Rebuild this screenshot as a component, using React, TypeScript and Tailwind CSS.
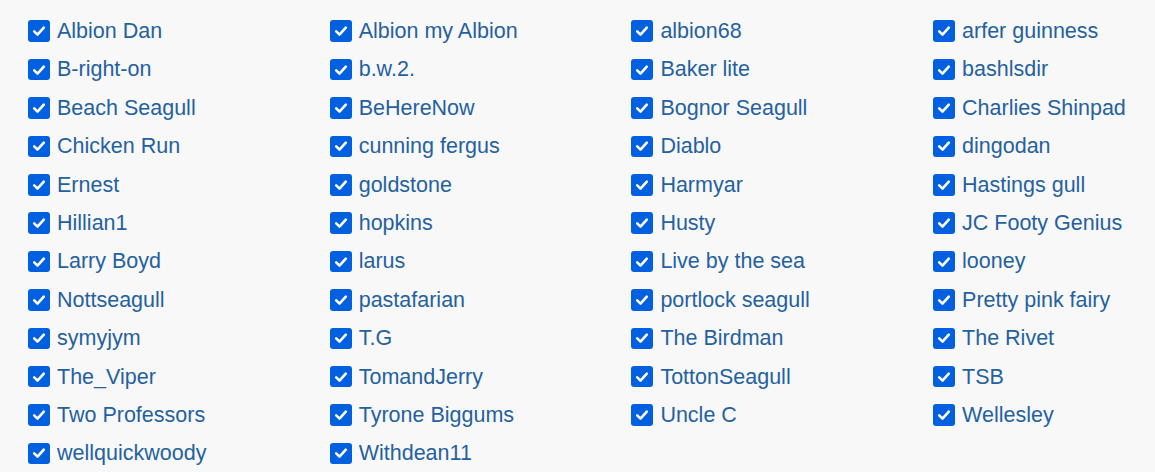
import React from 'react';

const names = [
  'Albion Dan', 'Albion my Albion', 'albion68', 'arfer guinness',
  'B-right-on', 'b.w.2.', 'Baker lite', 'bashlsdir',
  'Beach Seagull', 'BeHereNow', 'Bognor Seagull', 'Charlies Shinpad',
  'Chicken Run', 'cunning fergus', 'Diablo', 'dingodan',
  'Ernest', 'goldstone', 'Harmyar', 'Hastings gull',
  'Hillian1', 'hopkins', 'Husty', 'JC Footy Genius',
  'Larry Boyd', 'larus', 'Live by the sea', 'looney',
  'Nottseagull', 'pastafarian', 'portlock seagull', 'Pretty pink fairy',
  'symyjym', 'T.G', 'The Birdman', 'The Rivet',
  'The_Viper', 'TomandJerry', 'TottonSeagull', 'TSB',
  'Two Professors', 'Tyrone Biggums', 'Uncle C', 'Wellesley',
  'wellquickwoody', 'Withdean11',
];

function Check() {
  return (
    <span className="flex-none w-[22px] h-[21.5px] rounded-[3px] bg-[#0060df] flex items-center justify-center">
      <svg width="16" height="16" viewBox="0 0 16 16" fill="none">
        <path d="M3.2 8.4 L6.5 11.6 L12.8 4.6" stroke="white" strokeWidth="2.6" strokeLinecap="round" strokeLinejoin="round" />
      </svg>
    </span>
  );
}

export default function App() {
  return (
    <div className="w-[1155px] h-[472px] overflow-hidden bg-[#f8f8f8] pt-[12px] pl-[28px]" style={{ fontFamily: '"Liberation Sans", Arial, sans-serif' }}>
      <div className="grid grid-cols-[repeat(4,301.7px)]">
        {names.map(name => (
          <label key={name} className="h-[38.4px] flex items-center gap-[7px] text-[21.5px] text-[#2561a0] whitespace-nowrap">
            <Check />
            <span>{name}</span>
          </label>
        ))}
      </div>
    </div>
  );
}
